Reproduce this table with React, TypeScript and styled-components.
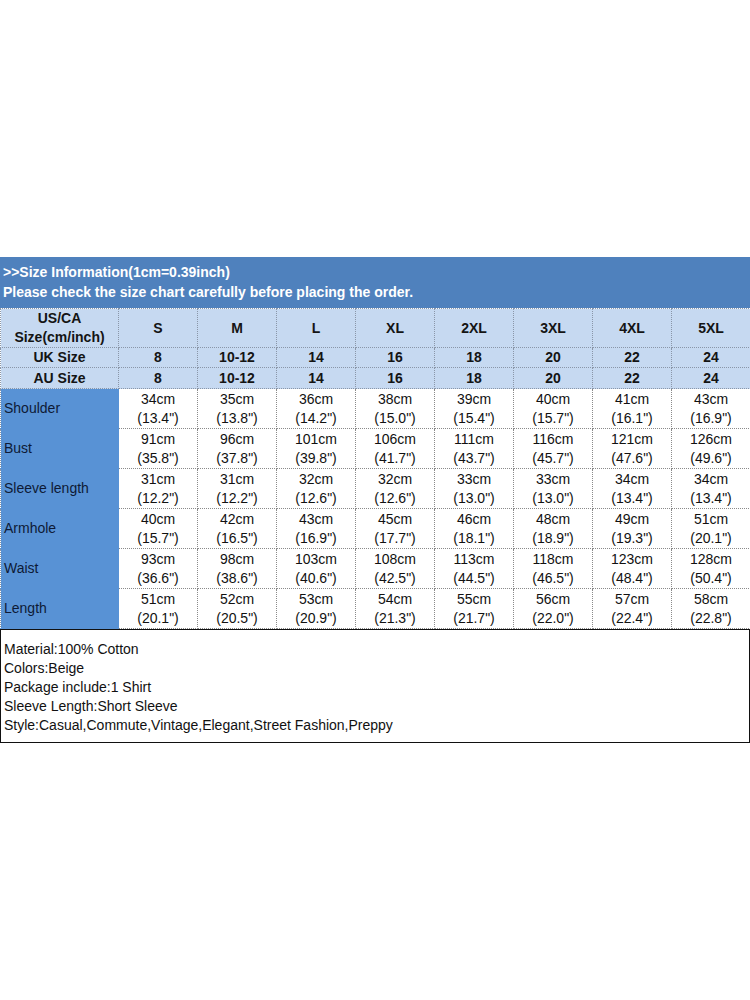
import styled, { createGlobalStyle } from "styled-components";

const GlobalStyle = createGlobalStyle`
  html, body {
    margin: 0;
    padding: 0;
    background: #fff;
  }
  body {
    font-family: "Liberation Sans", Arial, sans-serif;
    color: #111;
  }
`;

const sizes = [
  { us: "S", uk: "8", au: "8" },
  { us: "M", uk: "10-12", au: "10-12" },
  { us: "L", uk: "14", au: "14" },
  { us: "XL", uk: "16", au: "16" },
  { us: "2XL", uk: "18", au: "18" },
  { us: "3XL", uk: "20", au: "20" },
  { us: "4XL", uk: "22", au: "22" },
  { us: "5XL", uk: "24", au: "24" },
];

const measures = [
  {
    label: "Shoulder",
    values: [
      ["34cm", '(13.4")'],
      ["35cm", '(13.8")'],
      ["36cm", '(14.2")'],
      ["38cm", '(15.0")'],
      ["39cm", '(15.4")'],
      ["40cm", '(15.7")'],
      ["41cm", '(16.1")'],
      ["43cm", '(16.9")'],
    ],
  },
  {
    label: "Bust",
    values: [
      ["91cm", '(35.8")'],
      ["96cm", '(37.8")'],
      ["101cm", '(39.8")'],
      ["106cm", '(41.7")'],
      ["111cm", '(43.7")'],
      ["116cm", '(45.7")'],
      ["121cm", '(47.6")'],
      ["126cm", '(49.6")'],
    ],
  },
  {
    label: "Sleeve length",
    values: [
      ["31cm", '(12.2")'],
      ["31cm", '(12.2")'],
      ["32cm", '(12.6")'],
      ["32cm", '(12.6")'],
      ["33cm", '(13.0")'],
      ["33cm", '(13.0")'],
      ["34cm", '(13.4")'],
      ["34cm", '(13.4")'],
    ],
  },
  {
    label: "Armhole",
    values: [
      ["40cm", '(15.7")'],
      ["42cm", '(16.5")'],
      ["43cm", '(16.9")'],
      ["45cm", '(17.7")'],
      ["46cm", '(18.1")'],
      ["48cm", '(18.9")'],
      ["49cm", '(19.3")'],
      ["51cm", '(20.1")'],
    ],
  },
  {
    label: "Waist",
    values: [
      ["93cm", '(36.6")'],
      ["98cm", '(38.6")'],
      ["103cm", '(40.6")'],
      ["108cm", '(42.5")'],
      ["113cm", '(44.5")'],
      ["118cm", '(46.5")'],
      ["123cm", '(48.4")'],
      ["128cm", '(50.4")'],
    ],
  },
  {
    label: "Length",
    values: [
      ["51cm", '(20.1")'],
      ["52cm", '(20.5")'],
      ["53cm", '(20.9")'],
      ["54cm", '(21.3")'],
      ["55cm", '(21.7")'],
      ["56cm", '(22.0")'],
      ["57cm", '(22.4")'],
      ["58cm", '(22.8")'],
    ],
  },
];

const notes = [
  "Material:100% Cotton",
  "Colors:Beige",
  "Package include:1 Shirt",
  "Sleeve Length:Short Sleeve",
  "Style:Casual,Commute,Vintage,Elegant,Street Fashion,Preppy",
];

export default function App() {
  return (
    <>
      <GlobalStyle />
      <Page>
        <Chart>
          <Banner>
            <BannerLine>{">>Size Information(1cm=0.39inch)"}</BannerLine>
            <BannerLine>Please check the size chart carefully before placing the order.</BannerLine>
          </Banner>
          <Table>
            <colgroup>
              <col style={{ width: 118 }} />
              {sizes.map((s) => (
                <col key={s.us} style={{ width: 79 }} />
              ))}
            </colgroup>
            <tbody>
              <tr>
                <HeadCell $height={39}>
                  US/CA
                  <br />
                  Size(cm/inch)
                </HeadCell>
                {sizes.map((s) => (
                  <HeadCell key={s.us} $height={39}>
                    {s.us}
                  </HeadCell>
                ))}
              </tr>
              <tr>
                <HeadCell $height={20}>UK Size</HeadCell>
                {sizes.map((s) => (
                  <HeadCell key={s.us} $height={20}>
                    {s.uk}
                  </HeadCell>
                ))}
              </tr>
              <tr>
                <HeadCell $height={21}>AU Size</HeadCell>
                {sizes.map((s) => (
                  <HeadCell key={s.us} $height={21}>
                    {s.au}
                  </HeadCell>
                ))}
              </tr>
              {measures.map((m) => (
                <tr key={m.label}>
                  <LabelCell>{m.label}</LabelCell>
                  {m.values.map(([cm, inch], i) => (
                    <ValueCell key={i}>
                      {cm}
                      <br />
                      {inch}
                    </ValueCell>
                  ))}
                </tr>
              ))}
            </tbody>
          </Table>
          <Notes>
            {notes.map((n) => (
              <NoteLine key={n}>{n}</NoteLine>
            ))}
          </Notes>
        </Chart>
      </Page>
    </>
  );
}

const Page = styled.div`
  width: 750px;
  height: 1000px;
  padding-top: 257px;
  box-sizing: border-box;
`;

const Chart = styled.div`
  width: 750px;
  display: flex;
  flex-direction: column;
`;

const Banner = styled.div`
  height: 51px;
  background: #4f81bd;
  padding: 6px 0 0 3px;
  box-sizing: border-box;
  display: flex;
  flex-direction: column;
  gap: 1px;
`;

const BannerLine = styled.div`
  color: #fff;
  font-size: 14px;
  font-weight: bold;
  line-height: 19px;
`;

const Table = styled.table`
  width: 750px;
  table-layout: fixed;
  border-collapse: collapse;
  border-spacing: 0;
`;

const HeadCell = styled.td<{ $height: number }>`
  height: ${({ $height }) => $height}px;
  padding: 0;
  background: #c6d9f1;
  border: 1px dotted #8a96a8;
  text-align: center;
  vertical-align: middle;
  font-size: 14px;
  font-weight: bold;
  line-height: 19px;
  color: #141414;
  box-sizing: border-box;
`;

const LabelCell = styled.td`
  height: 40px;
  padding: 0 0 0 3px;
  background: #5892d5;
  border: 1px dotted #5892d5;
  border-left: 1px dotted #8a96a8;
  text-align: left;
  vertical-align: middle;
  font-size: 14px;
  line-height: 19px;
  color: #0e1a36;
  box-sizing: border-box;
`;

const ValueCell = styled.td`
  height: 40px;
  padding: 0;
  background: #fff;
  border: 1px dotted #8a8a8a;
  text-align: center;
  vertical-align: middle;
  font-size: 14px;
  line-height: 19px;
  color: #111;
  box-sizing: border-box;
`;

const Notes = styled.div`
  height: 114px;
  border: 1px solid #111;
  box-sizing: border-box;
  padding: 10px 0 0 3px;
  display: flex;
  flex-direction: column;
`;

const NoteLine = styled.div`
  font-size: 14px;
  line-height: 19px;
  color: #111;
`;
